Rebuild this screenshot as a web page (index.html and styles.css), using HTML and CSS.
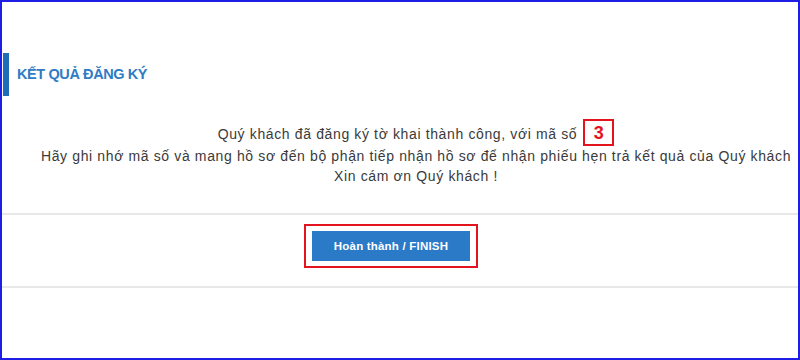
FILE: index.html
```html
<!DOCTYPE html>
<html lang="vi">
<head>
<meta charset="utf-8">
<title>Kết quả đăng ký</title>
<link rel="stylesheet" href="styles.css">
</head>
<body>
<div class="frame">
  <div class="head">
    <span class="bar"></span>
    <h2 class="title">KẾT QUẢ ĐĂNG KÝ</h2>
  </div>
  <div class="msg">
    <p class="line">Quý khách đã đăng ký tờ khai thành công, với mã số<span class="code">3</span></p>
    <p class="line">Hãy ghi nhớ mã số và mang hồ sơ đến bộ phận tiếp nhận hồ sơ để nhận phiếu hẹn trả kết quả của Quý khách</p>
    <p class="line">Xin cám ơn Quý khách !</p>
  </div>
  <div class="divider"></div>
  <div class="actions">
    <div class="mark"><button class="btn" type="button">Hoàn thành / FINISH</button></div>
  </div>
  <div class="divider"></div>
</div>
</body>
</html>
```
FILE: styles.css
```css
html, body {
  margin: 0;
  padding: 0;
  background: #ffffff;
}
.frame {
  width: 800px;
  height: 360px;
  box-sizing: border-box;
  border: 2px solid #1d1de6;
  background: #ffffff;
  font-family: "Liberation Sans", Arial, sans-serif;
  overflow: hidden;
}
.head {
  display: flex;
  align-items: center;
  margin-top: 51px;
  padding-left: 1px;
  height: 43px;
}
.bar {
  width: 6px;
  height: 43px;
  background: #1f6db6;
}
.title {
  margin: 0 0 0 8px;
  font-size: 14.5px;
  font-weight: bold;
  color: #2f7cc3;
  letter-spacing: -0.4px;
  position: relative;
  top: -1px;
}
.msg {
  margin-top: 23px;
  padding-left: 32px;
  text-align: center;
  color: #3a3a3a;
  font-size: 14px;
  line-height: 20px;
  letter-spacing: 0.63px;
}
.line {
  margin: 0;
  white-space: nowrap;
}
.code {
  display: inline-block;
  box-sizing: border-box;
  width: 31px;
  height: 27px;
  border: 2px solid #e3141e;
  padding-top: 2px;
  margin-left: 6px;
  font-family: "Liberation Sans", Arial, sans-serif;
  font-weight: bold;
  font-size: 18px;
  line-height: 21px;
  color: #e3141e;
  text-align: center;
  letter-spacing: 0;
}
.divider {
  height: 2px;
  background: #e8e8e8;
}
.msg + .divider {
  margin-top: 27px;
}
.actions {
  display: flex;
  justify-content: center;
  padding-right: 18px;
  margin-top: 9px;
  margin-bottom: 18px;
}
.mark {
  border: 2px solid #e3141e;
  padding: 5px 6px;
}
.btn {
  display: block;
  width: 158px;
  height: 30px;
  border: none;
  background: #2a7ac7;
  color: #ffffff;
  font-family: "Liberation Sans", Arial, sans-serif;
  font-weight: bold;
  font-size: 11.5px;
  letter-spacing: 0.2px;
  padding: 0;
}
```
